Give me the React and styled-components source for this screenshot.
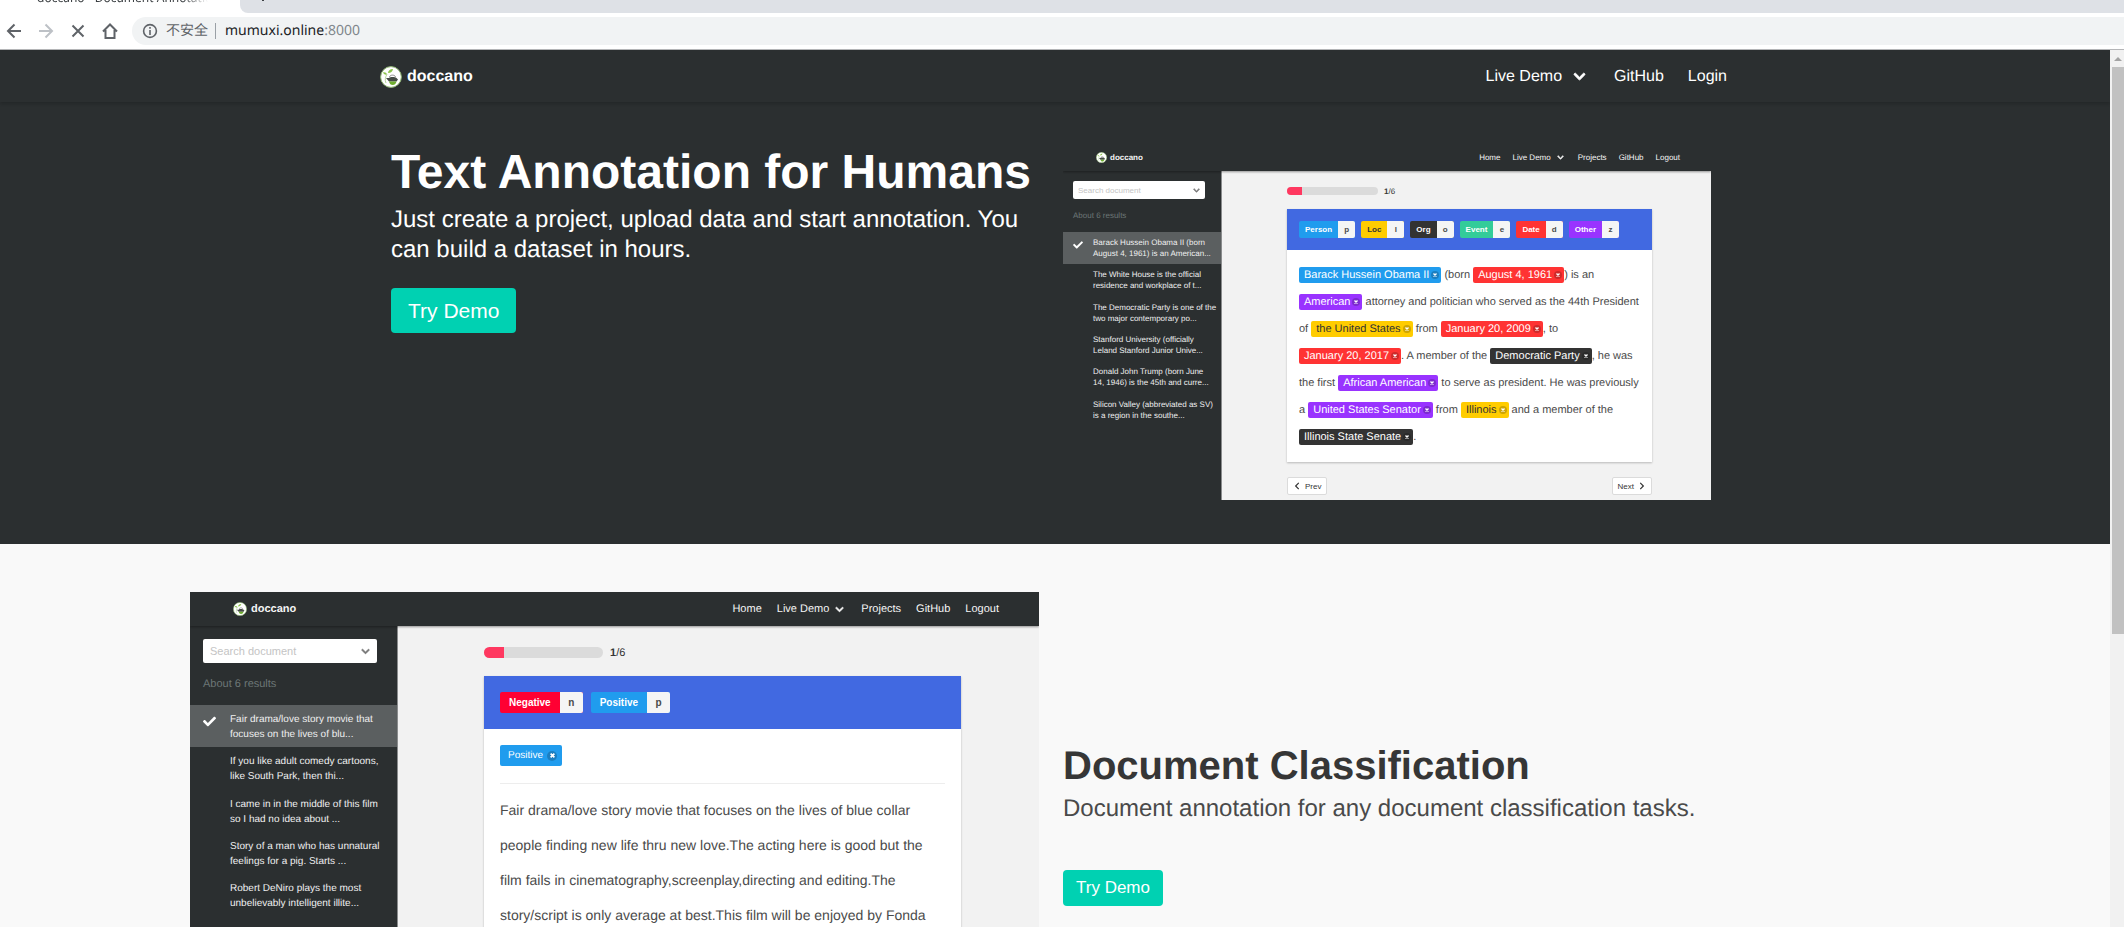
import React from "react";
import styled, { createGlobalStyle, ThemeProvider } from "styled-components";
import { FaChevronDown, FaChevronLeft, FaChevronRight, FaCheck } from "react-icons/fa";

const GlobalStyle = createGlobalStyle`
  * { box-sizing: border-box; }
  html, body, #root { height: 100%; }
  body {
    margin: 0;
    overflow: hidden;
    font-family: "Liberation Sans", Arial, "Noto Sans CJK SC", sans-serif;
    font-size: 16px;
    color: #4a4a4a;
    text-rendering: geometricPrecision;
  }
  a { color: inherit; text-decoration: none; }
  h1, h2, p, ul { margin: 0; padding: 0; }
  button, input { font-family: inherit; }
  svg { display: block; flex: none; }
`;

/* ---------- browser chrome ---------- */

const Browser = styled.div`
  display: flex;
  flex-direction: column;
  height: 100vh;
  background: #fff;
`;

const TabStrip = styled.div`
  display: flex;
  flex: none;
  height: 13px;
  overflow: hidden;
`;

const Tab = styled.div`
  display: flex;
  align-items: flex-end;
  width: 240px;
  padding: 0 32px 8px 37px;
  font: 12px/14px "Noto Sans", sans-serif;
  color: #3c4043;
  white-space: nowrap;
`;

const TabTitle = styled.span`
  overflow: hidden;
  mask-image: linear-gradient(to right, #000 85%, transparent);
`;

const StripRest = styled.div`
  display: flex;
  align-items: flex-end;
  flex: 1;
  padding: 0 0 11px 15px;
  border-bottom-left-radius: 8px;
  background: #dee1e6;
  color: #3c4043;
`;

const Toolbar = styled.div`
  display: flex;
  align-items: center;
  flex: none;
  height: 37px;
  padding: 3px 0 4px 6px;
  border-bottom: 1px solid #b4b5b7;
  color: #5f6368;
`;

const ToolButton = styled.button`
  display: flex;
  width: 16px;
  height: 16px;
  margin-right: 16px;
  padding: 0;
  border: 0;
  background: none;
  color: ${(p) => (p.$dim ? "#bdc1c6" : "#5f6368")};
  &:last-of-type { margin-right: 14px; }
`;

const Omnibox = styled.div`
  display: flex;
  align-items: center;
  flex: 1;
  height: 28px;
  padding-left: 10px;
  border-radius: 14px 0 0 14px;
  background: #f1f3f4;
  font: 14px/20px "Noto Sans", "Noto Sans CJK SC", sans-serif;
  color: #80868b;
`;

const Insecure = styled.span`
  margin-left: 8px;
  padding-right: 7px;
  border-right: 1px solid #9aa0a6;
  line-height: 16px;
  color: #5f6368;
`;

const Url = styled.span`
  margin-left: 9px;
`;

const Host = styled.span`
  color: #202124;
`;

const Viewport = styled.div`
  display: flex;
  flex: 1;
  min-height: 0;
`;

const Page = styled.div`
  flex: 1;
  min-width: 0;
  overflow: hidden;
  background: #f9f9f9;
`;

const ScrollTrack = styled.div`
  display: flex;
  flex-direction: column;
  width: 14px;
  padding-left: 2px;
  background: #f1f1f1;
`;

const ScrollArrow = styled.div`
  display: flex;
  align-items: center;
  justify-content: center;
  height: 17px;
`;

const ScrollThumb = styled.div`
  height: calc(65% - 3px);
  background: #c1c1c1;
`;

/* ---------- landing page ---------- */

const Navbar = styled.nav`
  position: relative;
  height: 52px;
  background: #2b2f30;
  box-shadow: 0 2px 3px rgba(10, 10, 10, 0.2);
  color: #fff;
`;

const NavInner = styled.div`
  display: flex;
  align-items: center;
  justify-content: space-between;
  height: 100%;
  max-width: 1350px;
  margin: 0 auto;
  padding: 1px 3px 0 0;
`;

const Brand = styled.a`
  display: flex;
  align-items: center;
  gap: 5px;
  font-weight: 700;
`;

const NavLinks = styled.div`
  display: flex;
  gap: 24px;
`;

const NavLink = styled.a`
  display: flex;
  align-items: center;
  gap: 11px;
  padding-right: ${(p) => (p.$menu ? 4 : 0)}px;
`;

const Hero = styled.section`
  padding: 43px 8px 44px 0;
  background: #2b2f30;
  color: #fff;
`;

const Feature = styled.section`
  padding: 48px 8px 48px 0;
`;

const Columns = styled.div`
  display: grid;
  grid-template-columns: 1fr 1fr;
  gap: 24px;
  align-items: ${(p) => p.$align};
  max-width: ${(p) => p.$max}px;
  margin: 0 auto;
`;

const HeroTitle = styled.h1`
  padding-top: 1px;
  font-size: 48px;
  line-height: 54px;
  white-space: nowrap;
`;

const FeatureTitle = styled.h2`
  padding-top: 1px;
  font-size: 40px;
  line-height: 45px;
  color: #363636;
`;

const Lead = styled.p`
  margin-top: 5px;
  margin-bottom: ${(p) => p.$after}px;
  font-size: 24px;
  line-height: 30px;
`;

const DemoButton = styled.button`
  height: ${(p) => (p.$large ? 45 : 36)}px;
  padding: 0 ${(p) => (p.$large ? 17 : 13)}px;
  border: 0;
  border-radius: 4px;
  background: #00d1b2;
  color: #fff;
  font-size: ${(p) => (p.$large ? 21 : 17)}px;
`;

/* ---------- annotation app preview ---------- */

const small = {
  nav: 26, navLeft: 33, navRight: 31, navGap: 12, menuGap: 6, menuEnd: 2, logo: 11, brandGap: 3, navFont: 8, navDrop: 2,
  font: 8, search: 8, side: 159, sidePad: 10, sideRight: 16, sideTop: 10, searchH: 18, searchPad: 5, chev: 7,
  aboutTop: 11, aboutH: 11, aboutEnd: 11, rowH: 194, rows: 6, line: 11, itemLeft: 30, itemDrop: 0, check: 10,
  mainTop: 16, mainLeft: 65, mainRight: 59, barW: 91, barH: 8, barGap: 6, barEnd: 14,
  headPad: 12, tagH: 17, tagPad: 6, keyW: 17, tagGap: 6,
  body: 11, bodyLine: 27, bodyTop: 11, bodyEnd: 12, del: 8, height: 355,
};

const large = {
  nav: 34, navLeft: 43, navRight: 40, navGap: 15, menuGap: 6, menuEnd: 2, logo: 14, brandGap: 4, navFont: 11, navDrop: 0,
  font: 10, search: 11, side: 208, sidePad: 13, sideRight: 20, sideTop: 13, searchH: 24, searchPad: 7, chev: 9,
  aboutTop: 14, aboutH: 14, aboutEnd: 14, rowH: 254, rows: 6, line: 15, itemLeft: 40, itemDrop: 2, check: 13,
  mainTop: 21, mainLeft: 86, mainRight: 78, barW: 119, barH: 11, barGap: 7, barEnd: 18,
  headPad: 16, tagH: 21, tagPad: 9, keyW: 23, tagGap: 8,
  body: 14, bodyLine: 35, bodyTop: 16, bodyEnd: 16, del: 10, height: 465,
};

const Frame = styled.div`
  display: flex;
  flex-direction: column;
  height: ${(p) => p.theme.height}px;
  overflow: hidden;
  background: #f2f2f2;
  color: #4a4a4a;
  font-size: ${(p) => p.theme.font}px;
`;

const AppNav = styled.div`
  position: relative;
  display: flex;
  align-items: center;
  justify-content: space-between;
  flex: none;
  height: ${(p) => p.theme.nav}px;
  padding: 0 ${(p) => p.theme.navRight}px ${(p) => p.theme.navDrop}px ${(p) => p.theme.navLeft}px;
  background: #2b2f30;
  box-shadow: 0 1px 2px rgba(10, 10, 10, 0.4);
  color: #f5f5f5;
  font-size: ${(p) => p.theme.navFont}px;
`;

const AppBrand = styled(Brand)`
  gap: ${(p) => p.theme.brandGap}px;
`;

const AppLinks = styled(NavLinks)`
  gap: ${(p) => p.theme.navGap}px;
`;

const AppLink = styled(NavLink)`
  gap: ${(p) => p.theme.menuGap}px;
  padding-right: ${(p) => (p.$menu ? p.theme.menuEnd : 0)}px;
`;

const AppBody = styled.div`
  display: flex;
  flex: 1;
`;

const Sidebar = styled.aside`
  width: ${(p) => p.theme.side}px;
  padding-top: ${(p) => p.theme.sideTop}px;
  border-right: 1px solid #8a8c8d;
  background: #2b2f30;
  color: #f0f0f0;
`;

const SearchBox = styled.label`
  display: flex;
  align-items: center;
  height: ${(p) => p.theme.searchH}px;
  margin: 0 ${(p) => p.theme.sideRight}px 0 ${(p) => p.theme.sidePad}px;
  padding: 0 ${(p) => p.theme.searchPad}px;
  border-radius: 2px;
  background: #fff;
  color: #777;
`;

const SearchInput = styled.input`
  flex: 1;
  min-width: 0;
  padding: 0;
  border: 0;
  outline: 0;
  background: none;
  font-size: ${(p) => p.theme.search}px;
  &::placeholder { color: #c4c4c4; }
`;

const ResultCount = styled.p`
  margin: ${(p) => p.theme.aboutTop}px 0 ${(p) => p.theme.aboutEnd}px ${(p) => p.theme.sidePad}px;
  font-size: ${(p) => p.theme.search}px;
  line-height: ${(p) => p.theme.aboutH}px;
  color: #6b7676;
`;

const DocList = styled.ul`
  display: grid;
  grid-template-rows: repeat(${(p) => p.theme.rows}, 1fr);
  height: ${(p) => p.theme.rowH}px;
  list-style: none;
`;

const DocItem = styled.li`
  display: flex;
  align-items: center;
  padding: ${(p) => p.theme.itemDrop}px 0 0 ${(p) => p.theme.sidePad}px;
  background: ${(p) => (p.$active ? "#5b5f60" : "transparent")};
  line-height: ${(p) => p.theme.line}px;
  white-space: pre;
`;

const CheckSlot = styled.span`
  align-self: flex-start;
  width: ${(p) => p.theme.itemLeft - p.theme.sidePad}px;
  padding-top: 8px;
  color: #fff;
`;

const Main = styled.main`
  flex: 1;
  min-width: 0;
  padding: ${(p) => p.theme.mainTop}px ${(p) => p.theme.mainRight}px 0 ${(p) => p.theme.mainLeft}px;
`;

const ProgressRow = styled.div`
  display: flex;
  align-items: center;
  gap: ${(p) => p.theme.barGap}px;
  height: ${(p) => p.theme.barH}px;
  margin-bottom: ${(p) => p.theme.barEnd}px;
`;

const ProgressTrack = styled.div`
  width: ${(p) => p.theme.barW}px;
  height: 100%;
  border-radius: 8px;
  overflow: hidden;
  background: #dbdbdb;
`;

const ProgressFill = styled.div`
  width: 17%;
  height: 100%;
  background: #ff3860;
`;

const ProgressText = styled.span`
  font-size: ${(p) => p.theme.search}px;
  color: #363636;
`;

const Card = styled.div`
  background: #fff;
  box-shadow: 0 1px 2px rgba(10, 10, 10, 0.25);
`;

const CardHead = styled.div`
  display: flex;
  gap: ${(p) => p.theme.tagGap}px;
  padding: ${(p) => p.theme.headPad}px;
  background: #4169e1;
`;

const LabelTag = styled.button`
  display: flex;
  height: ${(p) => p.theme.tagH}px;
  padding: 0;
  border: 0;
  border-radius: 2px;
  overflow: hidden;
  background: ${(p) => p.$bg};
  color: ${(p) => p.$fg || "#fff"};
  font-size: ${(p) => p.theme.font}px;
  font-weight: 700;
  line-height: ${(p) => p.theme.tagH}px;
`;

const LabelName = styled.span`
  padding: 0 ${(p) => p.theme.tagPad}px;
`;

const LabelKey = styled.kbd`
  width: ${(p) => p.theme.keyW}px;
  background: #f5f5f5;
  color: #4a4a4a;
  font-family: inherit;
`;

const CardBody = styled.div`
  padding: ${(p) => p.theme.bodyTop}px ${(p) => p.theme.headPad}px ${(p) => p.theme.bodyEnd}px;
`;

const TextLine = styled.p`
  display: flex;
  align-items: center;
  height: ${(p) => p.theme.bodyLine}px;
  font-size: ${(p) => p.theme.body}px;
  white-space: pre;
`;

const Entity = styled.span`
  display: flex;
  align-items: center;
  gap: 2px;
  height: 16px;
  padding: 0 2px 0 5px;
  border-radius: 2px;
  background: ${(p) => p.$bg};
  color: ${(p) => p.$fg || "#fff"};
`;

const DeleteButton = styled.button`
  display: flex;
  align-items: center;
  justify-content: center;
  width: ${(p) => p.theme.del}px;
  height: ${(p) => p.theme.del}px;
  padding: 0;
  border: 0;
  border-radius: 50%;
  background: rgba(10, 10, 10, 0.2);
  color: #fff;
`;

const ChosenTag = styled.span`
  display: flex;
  align-items: center;
  gap: 4px;
  width: fit-content;
  height: 21px;
  padding: 0 5px 0 8px;
  border-radius: 2px;
  background: #209cee;
  color: #fff;
`;

const Divider = styled.hr`
  height: 1px;
  margin: 17px 0 8px;
  border: 0;
  background: #ededed;
`;

const Pager = styled.div`
  display: flex;
  justify-content: space-between;
  margin-top: 15px;
`;

const PageButton = styled.button`
  display: flex;
  align-items: center;
  gap: 4px;
  height: 18px;
  padding: 0 5px;
  border: 1px solid #dbdbdb;
  border-radius: 2px;
  background: #fff;
  color: #363636;
  font-size: ${(p) => p.theme.font}px;
`;

function Logo({ size }) {
  return (
    <svg width={size} height={size} viewBox="0 0 22 22" aria-hidden="true">
      <circle cx="11" cy="11" r="10.4" fill="#fff" stroke="#8fb573" />
      <path d="M3 6.500c2-.5 3.500.5 4 2-2 .5-3.500-.5-4-2z" fill="#8bc34a" />
      <path d="M8 7c0-2 2-4 5-4-.500 2.500-2 4-5 4z" fill="#8bc34a" />
      <path d="M7 8c-1.500 3-2.500 6-1 9" fill="none" stroke="#b5d69a" />
      <path d="M9.500 11c.5-2.500 5.500-2.500 6 0" fill="none" stroke="#888" />
      <path d="M6 12l3 0c1-1.200 6-1.200 7.500 0l1.500 1.500-1.500 2h-7.500z" fill="#454b45" />
      <path d="M9 15.500h7.500c-.5 2.500-2 3.500-3.800 3.500S9.500 18 9 15.500z" fill="#6fae2f" />
    </svg>
  );
}

function Cross({ size }) {
  return (
    <svg width={size} height={size} viewBox="0 0 4 4" aria-hidden="true">
      <path d="M.5.5l3 3M3.5.5l-3 3" stroke="currentColor" strokeWidth="1.4" />
    </svg>
  );
}

function MenuArrow({ size }) {
  return <FaChevronDown size={size} stroke="currentColor" strokeWidth={36} />;
}

function AppShell({ size, docs, children }) {
  return (
    <ThemeProvider theme={size}>
      <Frame>
        <AppNav>
          <AppBrand href="#">
            <Logo size={size.logo} />
            doccano
          </AppBrand>
          <AppLinks>
            <AppLink href="#">Home</AppLink>
            <AppLink href="#" $menu>
              Live Demo <MenuArrow size={size.chev} />
            </AppLink>
            <AppLink href="#">Projects</AppLink>
            <AppLink href="#">GitHub</AppLink>
            <AppLink href="#">Logout</AppLink>
          </AppLinks>
        </AppNav>
        <AppBody>
          <Sidebar>
            <SearchBox>
              <SearchInput type="text" placeholder="Search document" aria-label="Search document" />
              <MenuArrow size={size.chev} />
            </SearchBox>
            <ResultCount>About 6 results</ResultCount>
            <DocList>
              {docs.map((text, i) => (
                <DocItem key={text} $active={i === 0}>
                  <CheckSlot>{i === 0 && <FaCheck size={size.check} />}</CheckSlot>
                  {text}
                </DocItem>
              ))}
            </DocList>
          </Sidebar>
          <Main>
            <ProgressRow>
              <ProgressTrack>
                <ProgressFill />
              </ProgressTrack>
              <ProgressText>
                <strong>1</strong>/6
              </ProgressText>
            </ProgressRow>
            {children}
          </Main>
        </AppBody>
      </Frame>
    </ThemeProvider>
  );
}

function Label({ name, shortcut, bg, fg }) {
  return (
    <LabelTag $bg={bg} $fg={fg}>
      <LabelName>{name}</LabelName>
      <LabelKey>{shortcut}</LabelKey>
    </LabelTag>
  );
}

const BLUE = { bg: "#209cee" };
const YELLOW = { bg: "#ffcc00", fg: "#333" };
const DARK = { bg: "#333333" };
const GREEN = { bg: "#33cc99" };
const RED = { bg: "#ff3333" };
const PURPLE = { bg: "#9933ff" };

const entityLabels = [
  ["Person", "p", BLUE], ["Loc", "l", YELLOW], ["Org", "o", DARK],
  ["Event", "e", GREEN], ["Date", "d", RED], ["Other", "z", PURPLE],
];

const entityLines = [
  [["Barack Hussein Obama II", BLUE], " (born ", ["August 4, 1961", RED], ") is an"],
  [["American", PURPLE], " attorney and politician who served as the 44th President"],
  ["of ", ["the United States", YELLOW], " from ", ["January 20, 2009", RED], ", to"],
  [["January 20, 2017", RED], ". A member of the ", ["Democratic Party", DARK], ", he was"],
  ["the first ", ["African American", PURPLE], " to serve as president. He was previously"],
  ["a ", ["United States Senator", PURPLE], " from ", ["Illinois", YELLOW], " and a member of the"],
  [["Illinois State Senate", DARK], "."],
];

const entityDocs = [
  "Barack Hussein Obama II (born\nAugust 4, 1961) is an American...",
  "The White House is the official\nresidence and workplace of t...",
  "The Democratic Party is one of the\ntwo major contemporary po...",
  "Stanford University (officially\nLeland Stanford Junior Unive...",
  "Donald John Trump (born June\n14, 1946) is the 45th and curre...",
  "Silicon Valley (abbreviated as SV)\nis a region in the southe...",
];

const reviewDocs = [
  "Fair drama/love story movie that\nfocuses on the lives of blu...",
  "If you like adult comedy cartoons,\nlike South Park, then thi...",
  "I came in in the middle of this film\nso I had no idea about ...",
  "Story of a man who has unnatural\nfeelings for a pig. Starts ...",
  "Robert DeNiro plays the most\nunbelievably intelligent illite...",
];

const reviewLines = [
  "Fair drama/love story movie that focuses on the lives of blue collar",
  "people finding new life thru new love.The acting here is good but the",
  "film fails in cinematography,screenplay,directing and editing.The",
  "story/script is only average at best.This film will be enjoyed by Fonda",
];

function EntityPreview() {
  return (
    <AppShell size={small} docs={entityDocs}>
      <Card>
        <CardHead>
          {entityLabels.map(([name, key, c]) => (
            <Label key={name} name={name} shortcut={key} {...c} />
          ))}
        </CardHead>
        <CardBody>
          {entityLines.map((line, i) => (
            <TextLine key={i}>
              {line.map((part, j) =>
                typeof part === "string" ? (
                  <span key={j}>{part}</span>
                ) : (
                  <Entity key={j} $bg={part[1].bg} $fg={part[1].fg}>
                    {part[0]}
                    <DeleteButton aria-label={`Remove ${part[0]}`}>
                      <Cross size={4} />
                    </DeleteButton>
                  </Entity>
                )
              )}
            </TextLine>
          ))}
        </CardBody>
      </Card>
      <Pager>
        <PageButton>
          <FaChevronLeft size={8} /> Prev
        </PageButton>
        <PageButton>
          Next <FaChevronRight size={8} />
        </PageButton>
      </Pager>
    </AppShell>
  );
}

function ClassificationPreview() {
  return (
    <AppShell size={large} docs={reviewDocs}>
      <Card>
        <CardHead>
          <Label name="Negative" shortcut="n" bg="#ff0033" />
          <Label name="Positive" shortcut="p" bg="#209cee" />
        </CardHead>
        <CardBody>
          <ChosenTag>
            Positive
            <DeleteButton aria-label="Remove Positive">
              <Cross size={5} />
            </DeleteButton>
          </ChosenTag>
          <Divider />
          {reviewLines.map((line) => (
            <TextLine key={line}>{line}</TextLine>
          ))}
        </CardBody>
      </Card>
    </AppShell>
  );
}

function ToolIcon({ d }) {
  return (
    <svg width="16" height="16" viewBox="0 0 16 16" fill="none" stroke="currentColor" strokeWidth="2" aria-hidden="true">
      <path d={d} />
    </svg>
  );
}

export default function App() {
  return (
    <Browser>
      <GlobalStyle />
      <TabStrip>
        <Tab>
          <TabTitle>doccano - Document Annotation</TabTitle>
        </Tab>
        <StripRest>
          <ToolIcon d="M8 1v14M1 8h14" />
        </StripRest>
      </TabStrip>
      <Toolbar>
        <ToolButton aria-label="Back">
          <ToolIcon d="M15 8H2M8.500 1.500L2 8l6.500 6.500" />
        </ToolButton>
        <ToolButton aria-label="Forward" $dim>
          <ToolIcon d="M1 8h13M7.500 1.500L14 8l-6.500 6.500" />
        </ToolButton>
        <ToolButton aria-label="Stop">
          <ToolIcon d="M2.500 2.500l11 11M13.500 2.500l-11 11" />
        </ToolButton>
        <ToolButton aria-label="Home">
          <ToolIcon d="M1 8.500L8 1.500l7 7M3.500 7v8h9V7" />
        </ToolButton>
        <Omnibox>
          <svg width="16" height="16" viewBox="0 0 16 16" fill="none" stroke="#5f6368" strokeWidth="1.600" aria-hidden="true">
            <circle cx="8" cy="8" r="6.400" />
            <path d="M8 7v5M8 4v1.700" />
          </svg>
          <Insecure>不安全</Insecure>
          <Url>
            <Host>mumuxi.online</Host>:8000
          </Url>
        </Omnibox>
      </Toolbar>
      <Viewport>
        <Page>
          <Navbar>
            <NavInner>
              <Brand href="#">
                <Logo size={22} />
                doccano
              </Brand>
              <NavLinks>
                <NavLink href="#" $menu>
                  Live Demo <MenuArrow size={13} />
                </NavLink>
                <NavLink href="#">GitHub</NavLink>
                <NavLink href="#">Login</NavLink>
              </NavLinks>
            </NavInner>
          </Navbar>
          <Hero>
            <Columns $max={1320} $align="start">
              <div>
                <HeroTitle>Text Annotation for Humans</HeroTitle>
                <Lead $after={23}>
                  Just create a project, upload data and start annotation. You can build a dataset in hours.
                </Lead>
                <DemoButton $large>Try Demo</DemoButton>
              </div>
              <EntityPreview />
            </Columns>
          </Hero>
          <Feature>
            <Columns $max={1722} $align="center">
              <ClassificationPreview />
              <div>
                <FeatureTitle>Document Classification</FeatureTitle>
                <Lead $after={46}>Document annotation for any document classification tasks.</Lead>
                <DemoButton>Try Demo</DemoButton>
              </div>
            </Columns>
          </Feature>
        </Page>
        <ScrollTrack aria-hidden="true">
          <ScrollArrow>
            <svg width="8" height="4" viewBox="0 0 8 4">
              <path d="M4 0l4 4H0z" fill="#a3a3a3" />
            </svg>
          </ScrollArrow>
          <ScrollThumb />
        </ScrollTrack>
      </Viewport>
    </Browser>
  );
}
